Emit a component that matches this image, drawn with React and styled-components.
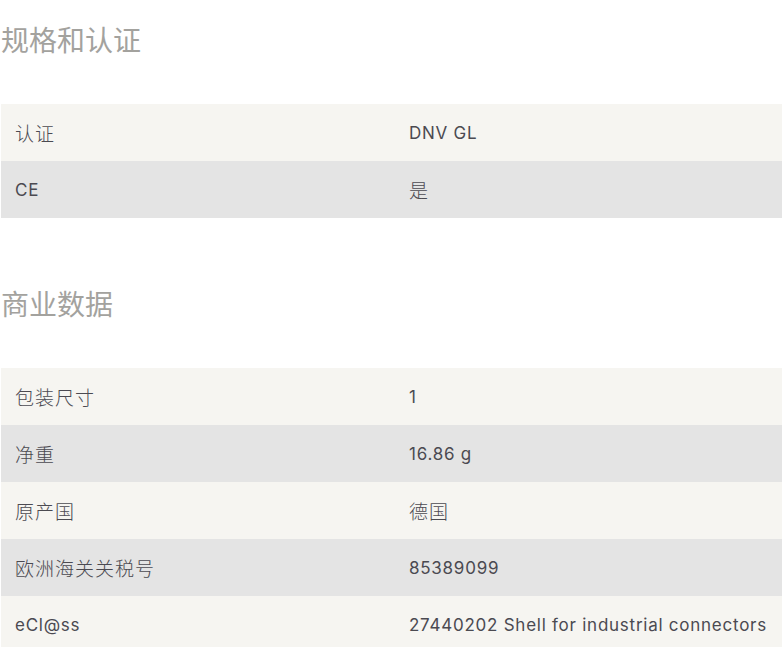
import React from 'react';
import styled, { createGlobalStyle } from 'styled-components';

const GlobalStyle = createGlobalStyle`
    body {
        margin: 0;
        background: #ffffff;
        font-family: Inter, "Noto Sans CJK SC", sans-serif;
    }
`;

const Page = styled.div`
    padding: 0 0 0 1px;
`;
const Section = styled.section`
    margin-bottom: 46px;
`;
const Heading = styled.h2`
    margin: 0 0 48px;
    padding-top: 22px;
    font-size: 28px;
    line-height: 34px;
    font-weight: 400;
    color: #a3a29e;
    font-family: "Noto Sans CJK SC", sans-serif;
`;
const Table = styled.div`
    display: flex;
    flex-direction: column;
`;
const Row = styled.div`
    display: grid;
    grid-template-columns: 394px 1fr;
    height: 57px;
    align-items: center;
    background: ${({ $shade }) => ($shade ? '#e4e4e4' : '#f6f5f1')};
`;
const Cell = styled.div`
    padding-left: 14px;
    white-space: nowrap;
    color: #4b4a51;
    font-family: ${({ $cjk }) => ($cjk ? '"Noto Sans CJK SC", sans-serif' : 'Inter, "Noto Sans CJK SC", sans-serif')};
    font-size: ${({ $cjk }) => ($cjk ? '19px' : '17px')};
    font-weight: ${({ $cjk }) => ($cjk ? 300 : 400)};
    letter-spacing: ${({ $cjk }) => ($cjk ? '1px' : '0.75px')};
`;

const hasCjk = (text) => /[\u3400-\u9fff]/.test(text);

const sections = [
    {
        title: '规格和认证',
        rows: [
            ['认证', 'DNV GL'],
            ['CE', '是'],
        ],
    },
    {
        title: '商业数据',
        rows: [
            ['包装尺寸', '1'],
            ['净重', '16.86 g'],
            ['原产国', '德国'],
            ['欧洲海关关税号', '85389099'],
            ['eCl@ss', '27440202 Shell for industrial connectors'],
        ],
    },
];

const App = () => {
    return (
        <Page>
            <GlobalStyle />
            {sections.map((section) => (
                <Section key={section.title}>
                    <Heading>{section.title}</Heading>
                    <Table>
                        {section.rows.map(([label, value], i) => (
                            <Row key={label} $shade={i % 2 === 1}>
                                <Cell $cjk={hasCjk(label)}>{label}</Cell>
                                <Cell $cjk={hasCjk(value)}>{value}</Cell>
                            </Row>
                        ))}
                    </Table>
                </Section>
            ))}
        </Page>
    );
};

export default App;
